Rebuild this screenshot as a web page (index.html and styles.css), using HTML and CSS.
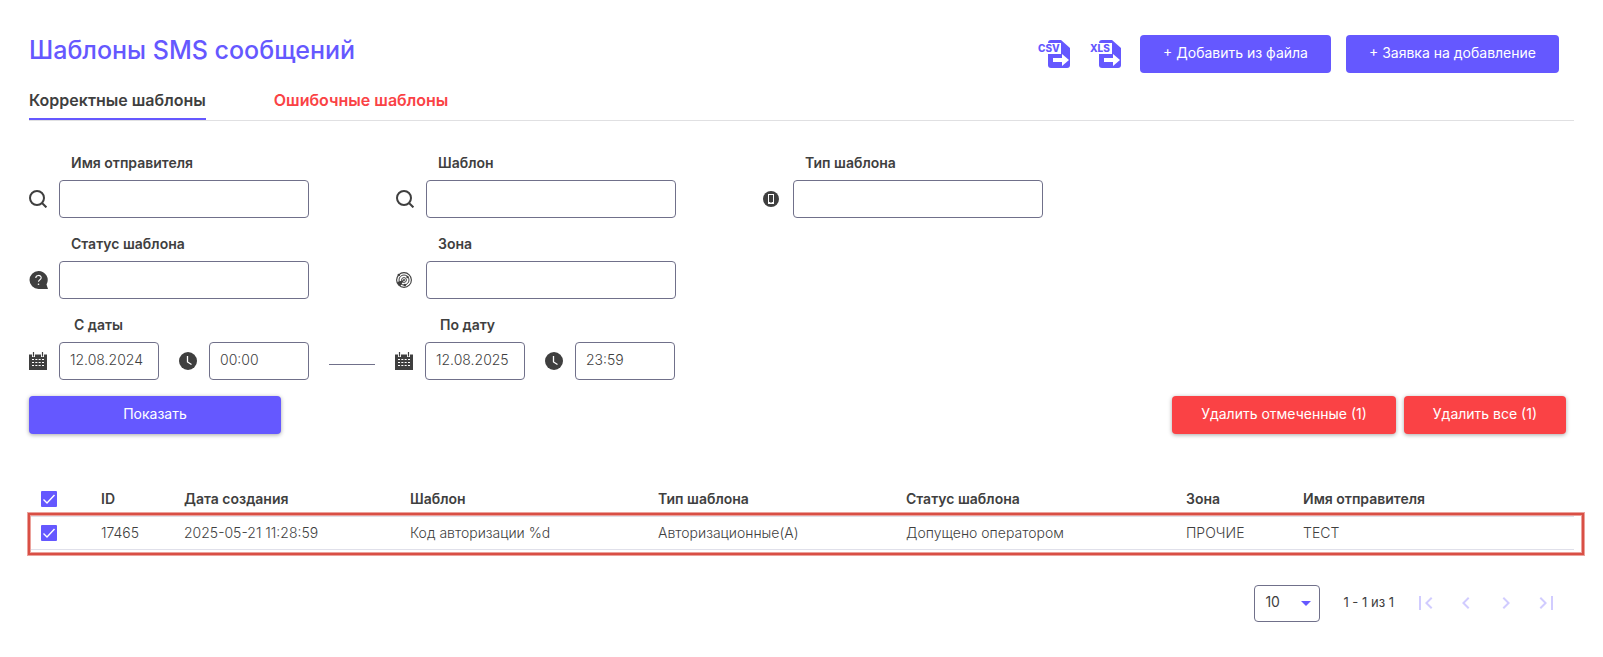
FILE: index.html
```html
<!DOCTYPE html>
<html lang="ru">
<head>
<meta charset="utf-8">
<meta name="viewport" content="width=device-width, initial-scale=1">
<title>Шаблоны SMS сообщений</title>
<link rel="stylesheet" href="styles.css">
</head>
<body>
<svg class="sprite" aria-hidden="true">
  <symbol id="search" viewBox="0 0 18 18"><circle cx="8" cy="8" r="7" fill="none" stroke="currentColor" stroke-width="2"/><path d="M13 13l4.4 4.4" stroke="currentColor" stroke-width="2"/></symbol>
  <symbol id="phone" viewBox="0 0 16 16"><circle cx="8" cy="8" r="8" fill="currentColor"/><rect x="5.5" y="3.5" width="5" height="9" fill="none" stroke="#fff"/><path d="M5.5 11.5h2m1 0h2" stroke="#fff"/></symbol>
  <symbol id="question" viewBox="0 0 19 18"><path d="M9.500 0a9.300 9 0 0 1 8 13.500l1.500 4.500h-9.500a9 9 0 0 1 0-18z" fill="currentColor"/><path d="M6.800 7c0-3.400 5.400-3.400 5.400-.2 0 2-2.700 1.900-2.700 4" fill="none" stroke="#fff" stroke-width="1.100"/><circle cx="9.500" cy="13.200" r=".8" fill="#fff"/></symbol>
  <symbol id="radar" viewBox="0 0 16 16"><g fill="none" stroke="currentColor"><circle cx="8" cy="8" r="7.400" stroke-width="1.100"/><circle cx="8" cy="8" r="5"/><circle cx="8" cy="8" r="2.400"/></g><path d="M8 8L1 10l1.300 3 2.200 1z" fill="currentColor"/><circle cx="2.800" cy="3" r="1.300" fill="currentColor"/><circle cx="11.500" cy="5" r="1.200" fill="currentColor"/><circle cx="8.800" cy="13" r="1.300" fill="currentColor"/><circle cx="8" cy="8" r="1" fill="currentColor"/></symbol>
  <symbol id="calendar" viewBox="0 0 18 18"><path d="M0 2.500h18V18H0z" fill="currentColor"/><path d="M4.500 0v5M13.500 0v5" stroke="#fff" stroke-width="3"/><path d="M4.500 0v4.500M13.500 0v4.500" stroke="currentColor" stroke-width="1.200"/><path d="M3 7.500h12M3 10.500h12M3 13.500h12" stroke="#fff" stroke-width="1.200" stroke-dasharray="2 1.330"/></symbol>
  <symbol id="clock" viewBox="0 0 18 18"><circle cx="9" cy="9" r="9" fill="currentColor"/><path d="M8.500 4v6l4 2.500" fill="none" stroke="#fff" stroke-width="1.300"/></symbol>
</svg>

<header class="page-head">
  <h1 class="title">Шаблоны SMS сообщений</h1>
  <div class="actions">
    <button class="export" type="button" aria-label="Экспорт CSV">
      <svg width="32" height="28" viewBox="0 0 32 28"><path d="M13 0h10l9 8v17q0 3-3 3H13q-3 0-3-3V3q0-3 3-3z" fill="#6558ff"/><path d="M8 3h15v11H8z" fill="#fff"/><path d="M15 18h9v-4l7 6-7 6v-4h-9z" fill="#fff"/><text class="export-text" x="0" y="12">CSV</text></svg>
    </button>
    <button class="export" type="button" aria-label="Экспорт XLS">
      <svg width="32" height="28" viewBox="0 0 32 28"><path d="M13 0h10l9 8v17q0 3-3 3H13q-3 0-3-3V3q0-3 3-3z" fill="#6558ff"/><path d="M8 3h15v11H8z" fill="#fff"/><path d="M15 18h9v-4l7 6-7 6v-4h-9z" fill="#fff"/><text class="export-text" x="1" y="12">XLS</text></svg>
    </button>
    <button class="btn" type="button">+ Добавить из файла</button>
    <button class="btn" type="button">+ Заявка на добавление</button>
  </div>
</header>

<nav class="tabs">
  <a class="tab active" href="#correct">Корректные шаблоны</a>
  <a class="tab error" href="#errors">Ошибочные шаблоны</a>
</nav>

<main>
  <form class="filters">
    <div class="grid">
      <div class="field"><label for="sender">Имя отправителя</label><svg class="icon" width="18" height="18"><use href="#search"/></svg><input id="sender" type="text"></div>
      <div class="field"><label for="template">Шаблон</label><svg class="icon" width="18" height="18"><use href="#search"/></svg><input id="template" type="text"></div>
      <div class="field"><label for="type">Тип шаблона</label><svg class="icon" width="16" height="16"><use href="#phone"/></svg><input id="type" type="text"></div>
      <div class="field"><label for="status">Статус шаблона</label><svg class="icon" width="19" height="18"><use href="#question"/></svg><input id="status" type="text"></div>
      <div class="field"><label for="zone">Зона</label><svg class="icon" width="16" height="16"><use href="#radar"/></svg><input id="zone" type="text"></div>
    </div>
    <div class="dates">
      <div class="field"><label for="from">С даты</label><svg class="icon" width="18" height="18"><use href="#calendar"/></svg>
        <div class="pair"><input id="from" type="text" value="12.08.2024"><svg width="18" height="18"><use href="#clock"/></svg><input type="text" aria-label="Время начала" value="00:00"></div></div>
      <span class="dash"></span>
      <div class="field"><label for="to">По дату</label><svg class="icon" width="18" height="18"><use href="#calendar"/></svg>
        <div class="pair"><input id="to" type="text" value="12.08.2025"><svg width="18" height="18"><use href="#clock"/></svg><input type="text" aria-label="Время окончания" value="23:59"></div></div>
    </div>
    <div class="bar">
      <button class="btn raised show" type="button">Показать</button>
      <div class="deletes">
        <button class="btn raised danger" type="button">Удалить отмеченные (1)</button>
        <button class="btn raised danger" type="button">Удалить все (1)</button>
      </div>
    </div>
  </form>

  <div class="table-wrap">
    <table>
      <colgroup><col class="c-check"><col class="c-id"><col class="c-date"><col class="c-wide"><col class="c-wide"><col class="c-status"><col class="c-zone"><col class="c-sender"></colgroup>
      <thead><tr><th><input type="checkbox" aria-label="Выбрать все" checked></th><th>ID</th><th>Дата создания</th><th>Шаблон</th><th>Тип шаблона</th><th>Статус шаблона</th><th>Зона</th><th>Имя отправителя</th></tr></thead>
      <tbody><tr><td><input type="checkbox" aria-label="Выбрать 17465" checked></td><td>17465</td><td>2025-05-21 11:28:59</td><td>Код авторизации %d</td><td>Авторизационные(А)</td><td>Допущено оператором</td><td>ПРОЧИЕ</td><td>ТЕСТ</td></tr></tbody>
    </table>
    <span class="highlight"></span>
  </div>

  <footer class="pager">
    <div class="page-size"><select aria-label="Строк на странице"><option>10</option></select><span class="caret"></span></div>
    <span class="range">1 - 1 из 1</span>
    <div class="pages">
      <button type="button" aria-label="Первая"><svg viewBox="0 0 24 24"><path d="M18.410 16.590L13.820 12l4.590-4.590L17 6l-6 6 6 6zM5 5h2v14H5z"/></svg></button>
      <button type="button" aria-label="Предыдущая"><svg viewBox="0 0 24 24"><path d="M15.410 7.410L14 6l-6 6 6 6 1.410-1.410L10.830 12z"/></svg></button>
      <button type="button" aria-label="Следующая"><svg viewBox="0 0 24 24"><path d="M10 6L8.590 7.410 13.170 12l-4.580 4.590L10 18l6-6z"/></svg></button>
      <button type="button" aria-label="Последняя"><svg viewBox="0 0 24 24"><path d="M5.590 7.410L10.180 12l-4.590 4.590L7 18l6-6-6-6zM17 5h2v14h-2z"/></svg></button>
    </div>
  </footer>
</main>
</body>
</html>
```
FILE: styles.css
```css
* { box-sizing: border-box; }
body {
  margin: 0;
  padding: 35px 29px 20px;
  background: #fff;
  color: #3f3f3f;
  font: 400 14px/20px Inter, "Open Sans", sans-serif;
}
.sprite { position: absolute; width: 0; height: 0; }
button, input, select { font: inherit; color: inherit; }
button { cursor: pointer; border: 0; padding: 0; background: none; }

.page-head { display: flex; justify-content: space-between; align-items: flex-start; padding-right: 15px; }
.title { margin: 0; color: #6558ff; font-size: 25px; font-weight: 500; line-height: 30px; }
.actions { display: flex; align-items: center; gap: 15px; }
.export { width: 36px; height: 28px; text-align: left; }
.export svg { display: block; overflow: visible; }
.export-text { fill: #6558ff; font: 800 10px Inter, sans-serif; }
.btn {
  height: 38px;
  padding: 0 23px 3px;
  border-radius: 4px;
  background: #6558ff;
  color: #fff;
}
.raised { box-shadow: 0 1px 4px rgba(0, 0, 0, .35); }
.danger { background: #fa4245; padding: 0 29px 3px; }

.tabs { display: flex; gap: 68px; padding-top: 13px; border-bottom: 1px solid #e0e0e2; }
.tab {
  padding: 3px 0 7px;
  border-bottom: 2px solid transparent;
  color: #3f3f3f;
  font-size: 16px;
  font-weight: 600;
  line-height: 22px;
  text-decoration: none;
}
.active { border-color: #6558ff; }
.error { color: #fa4245; }

.grid { display: grid; grid-template-columns: repeat(auto-fill, 280px); gap: 16px 87px; max-width: 1100px; padding-top: 32px; }
.field { display: grid; grid-template-columns: 30px 250px; row-gap: 7px; align-items: center; }
.field label { grid-column: 2; padding-left: 12px; font-weight: 600; }
.field input {
  width: 100%;
  height: 38px;
  padding: 0 10px 4px;
  border: 1px solid #70708a;
  border-radius: 4px;
  background: #fff;
  font-weight: 300;
}
.dates { display: flex; flex-wrap: wrap; align-items: flex-end; gap: 20px; padding-top: 16px; }
.dates label { padding-left: 15px; }
.pair { display: grid; grid-template-columns: 100px 50px 100px; align-items: center; }
.pair svg { margin-left: 20px; }
.dash { width: 46px; height: 1px; margin-bottom: 15px; background: #70708a; }
.bar { display: flex; justify-content: space-between; padding: 16px 8px 0 0; }
.show { width: 252px; }
.deletes { display: flex; gap: 8px; }

.table-wrap { position: relative; margin-top: 49px; }
table { width: 100%; border-collapse: collapse; table-layout: fixed; }
.c-check { width: 72px; }
.c-id { width: 83px; }
.c-date { width: 226px; }
.c-wide { width: 248px; }
.c-status { width: 280px; }
.c-zone { width: 117px; }
.c-sender { width: 271px; }
th, td { height: 33px; padding: 0; border-bottom: 1px solid #e0e0ea; text-align: left; vertical-align: middle; }
th { font-weight: 600; }
td { font-weight: 300; }
th:first-child, td:first-child { padding-left: 12px; }
input[type="checkbox"] {
  display: block;
  appearance: none;
  width: 16px;
  height: 16px;
  margin: 0;
  border-radius: 1px;
  background: #6558ff url("data:image/svg+xml,%3Csvg xmlns='http://www.w3.org/2000/svg' viewBox='0 0 16 16'%3E%3Cpath d='M2.500 8.500l3.500 3.500 7.500-8' fill='none' stroke='white' stroke-width='1.400'/%3E%3C/svg%3E");
}
.highlight {
  position: absolute;
  inset: 30px -10px -5px -1px;
  border: 2px solid #d94f45;
  box-shadow: 0 0 0 1px #eba29c, inset 0 0 0 1px #eba29c;
  pointer-events: none;
}

.pager { display: flex; justify-content: flex-end; align-items: center; padding: 35px 8px 0 0; }
.page-size { display: grid; align-items: center; width: 66px; }
.page-size select {
  grid-area: 1 / 1;
  appearance: none;
  height: 37px;
  padding: 0 10px 2px;
  border: 1px solid #70708a;
  border-radius: 4px;
  background: #fff;
}
.caret {
  grid-area: 1 / 1;
  justify-self: end;
  margin-right: 9px;
  border: 5px solid transparent;
  border-top-color: #6558ff;
  border-bottom: 0;
  pointer-events: none;
}
.range { padding: 0 12px 2px 23px; font-size: 13px; }
.pages { display: flex; }
.pages button { width: 40px; height: 36px; display: grid; place-items: center; }
.pages svg { width: 24px; height: 24px; fill: #d1ccff; }
```
